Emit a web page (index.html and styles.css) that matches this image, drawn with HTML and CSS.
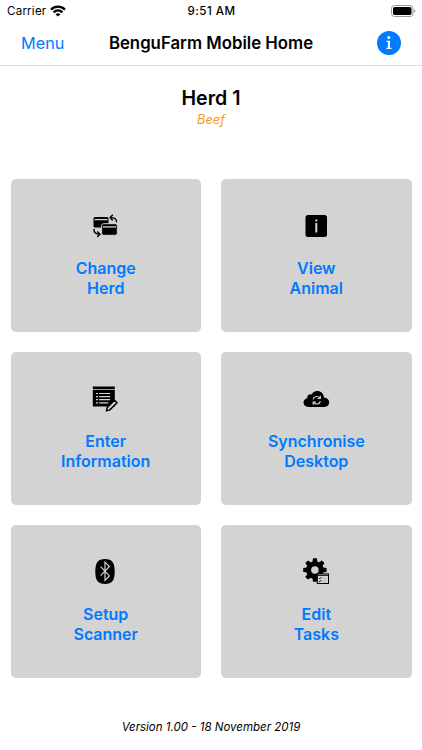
FILE: index.html
```html
<!DOCTYPE html>
<html lang="en">
<head>
    <meta charset="UTF-8">
    <meta name="viewport" content="width=device-width, initial-scale=1.0">
    <title>BenguFarm Mobile Home</title>
    <link rel="stylesheet" href="styles.css">
</head>
<body>
    <div class="status-bar">
        <div class="carrier">
            <span>Carrier</span>
            <svg width="16" height="12" viewBox="0 0 16 12" fill="none" stroke="#000" stroke-width="2.3">
                <path d="M1 4.6C5 .7 11 .7 15 4.6"/>
                <path d="M3.6 7.3c2.6-2.5 6.2-2.5 8.8 0"/>
                <path d="M8 11.6L5.5 9.2c1.5-1.3 3.5-1.3 5 0z" fill="#000" stroke="none"/>
            </svg>
        </div>
        <div class="clock">9:51 AM</div>
        <div class="battery">
            <svg width="25" height="12" viewBox="0 0 25 12">
                <rect x=".5" y=".5" width="21.5" height="11" rx="3" fill="none" stroke="#999"/>
                <rect x="2" y="2" width="18.5" height="8" rx="1.7"/>
                <path d="M23.2 4.2c1.5.5 1.5 3.1 0 3.6z" fill="#999"/>
            </svg>
        </div>
    </div>

    <div class="nav-bar">
        <a class="menu-link">Menu</a>
        <h1>BenguFarm Mobile Home</h1>
        <a class="info-link">
            <svg width="24" height="24" viewBox="0 0 24 24">
                <circle cx="12" cy="12" r="12" fill="#007aff"/>
                <circle cx="11.8" cy="6.6" r="1.5" fill="#fff"/>
                <path d="M9.5 9.8h3.5v7h1.5v1.3h-5v-1.3h1.4v-5.7H9.5z" fill="#fff"/>
            </svg>
        </a>
    </div>

    <div class="herd">
        <h2>Herd 1</h2>
        <div class="herd-type">Beef</div>
    </div>

    <div class="tiles">
        <div class="tile">
            <svg class="icon" viewBox="0 0 27 28">
                <rect x="1.5" y="5" width="15" height="10.5" rx="1.5"/>
                <path d="M2.5 7.6h13" stroke="#d3d3d3" stroke-width="1.3"/>
                <rect x="9.6" y="11.7" width="15.7" height="11.6" rx="2" stroke="#d3d3d3"/>
                <path d="M10.8 14.9h13.3" stroke="#d3d3d3" stroke-width="1.3"/>
                <path d="M24.6 10.2c0-3-1.5-4.6-6-4.6M20.8 2.8l-2.7 2.8 2.7 2.8" fill="none" stroke="#000" stroke-width="1.4"/>
                <path d="M1.9 17c0 3.4 1.7 5.2 5.7 5.2M5.2 19.4l2.8 2.8-2.8 2.8" fill="none" stroke="#000" stroke-width="1.4"/>
            </svg>
            <span>Change<br>Herd</span>
        </div>
        <div class="tile">
            <svg class="icon" viewBox="0 0 27 28">
                <rect x="2.5" y="3" width="21.5" height="22" rx="2.5"/>
                <path d="M12.3 7.5h2v2h-2zM12.3 11h2v9.5h-2z" fill="#d3d3d3"/>
            </svg>
            <span>View<br>Animal</span>
        </div>
        <div class="tile">
            <svg class="icon" viewBox="0 0 27 28">
                <path d="M.8 1.5h22v2.7H.8zM.8 5h22v16.5H.8z"/>
                <path d="M4 8.5h2M4 11.6h2M4 14.7h2M4 17.8h2M7.2 8.5h10.9M7.2 11.6h10.9M7.2 14.7h10.9M7.2 17.8h9" stroke="#d3d3d3" stroke-width="1.2"/>
                <path d="M22.5 15.2l2.6 2.5-7.3 7.2-3.4 1 .9-3.5z" fill="#d3d3d3" stroke="#000" stroke-width="1.5" stroke-linejoin="round"/>
            </svg>
            <span>Enter<br>Information</span>
        </div>
        <div class="tile">
            <svg class="icon" viewBox="0 0 27 28">
                <path d="M5.5 22C2.5 22 .5 20.2.5 17.6c0-2.3 1.5-4 3.7-4.3C4 10.6 6.2 8.8 8.7 9.5 9.7 7.3 11.7 6 14.2 6c3.7 0 6.5 2.7 6.7 6.4 3.1.1 5.3 2.2 5.3 4.9 0 2.8-2 4.7-5 4.7z"/>
                <path d="M10.1 14.3c.7-3.4 4.9-3.6 6.9-1.2M17.3 10.8v2.7h-2.7M17.4 16.2c-.7 3.4-4.9 3.6-6.9 1.2M10.2 19.7V17h2.7" fill="none" stroke="#d3d3d3" stroke-width="1.2"/>
            </svg>
            <span>Synchronise<br>Desktop</span>
        </div>
        <div class="tile">
            <svg class="icon" viewBox="0 0 27 28">
                <path d="M13 1c6.8 0 9.7 3.2 9.7 12.5S19.8 26 13 26 3.3 22.8 3.3 13.5 6.2 1 13 1z"/>
                <path d="M8.6 8.7l8.8 9.2-4.4 4.4V4.1l4.4 4.4-8.8 9.2" fill="none" stroke="#d3d3d3" stroke-width="1.2"/>
            </svg>
            <span>Setup<br>Scanner</span>
        </div>
        <div class="tile">
            <svg class="icon" viewBox="0 0 27 28">
                <g transform="translate(11.9 12)">
                    <circle r="6.3" fill="none" stroke="#000" stroke-width="5"/>
                    <path id="teeth" d="M-2.6-7.5l.7-4.2h3.8l.7 4.2zM-2.6 7.5l.7 4.2h3.8l.7-4.2zM-7.5-2.6l-4.2.7v3.8l4.2.7zM7.5-2.6l4.2.7v3.8l-4.2.7z"/>
                    <use href="#teeth" transform="rotate(45)"/>
                </g>
                <rect x="14.3" y="15.9" width="11.2" height="9.6" fill="#d3d3d3" stroke="#000"/>
                <path d="M14.3 17.3h11.2M15.9 20.1l.8.8 1.7-1.7M15.9 23l.8.8 1.7-1.7" fill="none" stroke="#000"/>
                <path d="M19.8 20.5h3.8M19.8 23.4h3.8" stroke="#aaa" stroke-width=".6"/>
            </svg>
            <span>Edit<br>Tasks</span>
        </div>
    </div>

    <div class="version">Version 1.00 - 18 November 2019</div>
</body>
</html>
```
FILE: styles.css
```css
body {
    font-family: Inter, "Liberation Sans", sans-serif;
    background-color: #fff;
    color: #000;
    margin: 0;
    height: 750px;
    overflow: hidden;
}

.status-bar {
    display: grid;
    grid-template-columns: 1fr auto 1fr;
    align-items: center;
    height: 22px;
    padding: 0 6px 0 7px;
    font-size: 11.6px;
}

.carrier {
    display: flex;
    align-items: center;
    gap: 4px;
    letter-spacing: 0.2px;
}

.clock {
    font-weight: 500;
    letter-spacing: 0.5px;
}

.battery {
    display: flex;
    justify-content: flex-end;
}

.nav-bar {
    display: grid;
    grid-template-columns: 1fr auto 1fr;
    align-items: center;
    box-sizing: border-box;
    height: 44px;
    padding: 0 21px 1px;
    border-bottom: 1px solid #dcdcdc;
}

.nav-bar h1 {
    margin: 0;
    font-size: 16.8px;
    font-weight: 600;
}

.menu-link {
    color: #007aff;
    font-size: 16.3px;
}

.info-link {
    display: flex;
    justify-content: flex-end;
}

.herd {
    height: 113px;
    padding-top: 20px;
    box-sizing: border-box;
    text-align: center;
}

.herd h2 {
    margin: 0;
    font-size: 19.6px;
    line-height: 24px;
    font-weight: 600;
}

.herd-type {
    color: #f59a23;
    font-size: 12.8px;
    line-height: 19px;
    font-style: italic;
}

.tiles {
    display: grid;
    grid-template-columns: 1fr 1fr;
    grid-auto-rows: 153px;
    gap: 20.2px;
    padding: 0 10.5px;
}

.tile {
    display: flex;
    flex-direction: column;
    align-items: center;
    box-sizing: border-box;
    padding-top: 33px;
    background-color: #d3d3d3;
    border-radius: 5px;
    color: #007aff;
    font-size: 16px;
    font-weight: 600;
    line-height: 19.5px;
    text-align: center;
}

.icon {
    width: 27px;
    height: 28px;
    margin-bottom: 19px;
}

.version {
    margin-top: 41px;
    font-size: 11.5px;
    line-height: 16px;
    font-style: italic;
    text-align: center;
}
```
